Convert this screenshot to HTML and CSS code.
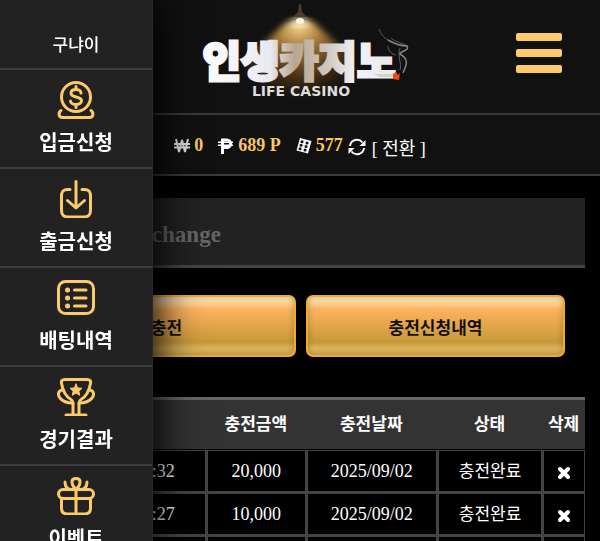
FILE: index.html
```html
<!DOCTYPE html>
<html lang="ko">
<head>
    <meta charset="UTF-8">
    <meta name="viewport" content="width=device-width, initial-scale=1">
    <title>인생카지노</title>
    <link rel="stylesheet" href="styles.css">
</head>
<body>
<nav class="sidebar">
    <p class="user-name">구냐이</p>
    <a href="#" class="menu-item">
        <svg viewBox="0 0 38 38">
            <circle cx="19" cy="16" r="14.500"/>
            <path d="M24 12c0-2-2-3.500-5-3.500s-5 1.500-5 3.800c0 5 10.500 2.500 10.500 7.500 0 2.300-2.500 3.700-5.500 3.700s-5.500-1.500-5.500-3.500M19 5.500v3M19 23.500v3"/>
            <path d="M4 29.500c-3 2-2.500 7 1.500 7h27c4 0 4.500-5 1.500-7"/>
        </svg>
        <span>입금신청</span>
    </a>
    <a href="#" class="menu-item">
        <svg viewBox="0 0 38 38">
            <path d="M13 9.500h-2c-5 0-6.500 2-6.500 6.500v14c0 5 2 7 7 7h15c5 0 7-2 7-7V16c0-4.500-1.500-6.500-6.500-6.500h-2M19 1.500v26M10.500 20.500l8.500 7.500 8.500-7.500"/>
        </svg>
        <span>출금신청</span>
    </a>
    <a href="#" class="menu-item">
        <svg viewBox="0 0 38 38">
            <rect x="1.500" y="2.500" width="35" height="32" rx="7"/>
            <path d="M17.500 11h11.500M17.500 19h11.500M17.500 27h11.500"/>
            <path class="dots" d="M10.500 11h.1M10.500 19h.1M10.500 27h.1"/>
        </svg>
        <span>배팅내역</span>
    </a>
    <a href="#" class="menu-item">
        <svg viewBox="0 0 38 38">
            <path d="M8 1.500h22c3 0 4 1.500 3.500 4-1.500 8-4 13-9.500 16-1.500 1-2 2-2 4V37M8 1.500c-3 0-4 1.500-3.500 4 1.500 8 4 13 9.500 16 1.500 1 2 2 2 4V37M9 37h20"/>
            <path d="M5 12c-4 1-4.500 5-2 8 3 4 8 5 13 5M33 12c4 1 4.500 5 2 8-3 4-8 5-13 5"/>
            <path class="solid" d="M19 6l1.700 3.900 4.300.4-3.200 2.800.9 4.200-3.700-2.200-3.700 2.200.9-4.200-3.200-2.800 4.300-.4z"/>
        </svg>
        <span>경기결과</span>
    </a>
    <a href="#" class="menu-item">
        <svg viewBox="0 0 38 38">
            <rect x="1.500" y="12.500" width="35" height="9" rx="4.500"/>
            <path d="M4.500 22v9c0 4 2 6 6 6h17c4 0 6-2 6-6v-9M19 12.500V37"/>
            <path d="M19 12c-3-2-4-5-4-7.500 0-4 8-4 8 0 0 2.500-1 5.500-4 7.500zM8 5c0 4 2 7 6 7.500M30 5c0 4-2 7-6 7.500"/>
        </svg>
        <span>이벤트</span>
    </a>
</nav>

<header class="header">
    <a href="#" class="logo" aria-label="인생카지노">
        <svg viewBox="0 0 230 113">
            <defs>
                <radialGradient id="glow" gradientUnits="userSpaceOnUse" cx="109" cy="24" r="80">
                    <stop offset="0" stop-color="#ffe0a0"/>
                    <stop offset=".25" stop-color="#c8964a" stop-opacity=".9"/>
                    <stop offset=".65" stop-color="#7a501c" stop-opacity=".55"/>
                    <stop offset="1" stop-color="#3a2408" stop-opacity="0"/>
                </radialGradient>
                <linearGradient id="stone" gradientUnits="userSpaceOnUse" x1="13" y1="0" x2="205" y2="0">
                    <stop offset="0" stop-color="#fff"/>
                    <stop offset=".35" stop-color="#e9e9f0"/>
                    <stop offset=".48" stop-color="#b8a68e"/>
                    <stop offset=".65" stop-color="#cfc8c2"/>
                    <stop offset=".8" stop-color="#f2f2f6"/>
                    <stop offset="1" stop-color="#e8e8ee"/>
                </linearGradient>
                <filter id="soft" x="-20%" y="-20%" width="140%" height="140%">
                    <feGaussianBlur stdDeviation="3"/>
                </filter>
            </defs>
            <path fill="url(#glow)" filter="url(#soft)" d="M98 21h24l36 32q12 20-6 34-43 18-86 0-14-18-4-34z"/>
            <path fill="#4a3c30" d="M109 4h2l1 8 4 4 8 6q-14-4-28 0l8-6 4-4z"/>
            <ellipse cx="110" cy="23" rx="9" ry="4" fill="#fff0c0" filter="url(#soft)"/>
            <ellipse cx="110" cy="21" rx="4" ry="3" fill="#fff6d8"/>
            <text class="logo-name" x="109" y="77" text-anchor="middle" fill="url(#stone)" stroke="url(#stone)">인생카지노</text>
            <g fill="none" stroke="#aaa">
                <path stroke-width="1.500" opacity=".75" d="M213 73c4-9 6-14-3-19 0-3 10-3 7-8-7 0-14-3-19-6"/>
                <path opacity=".5" d="M210 70c2-8-3-13 0-22M198 40c-5-3-7-6-9-11M198 46c0 4 3 8 8 9M217 46c-4-3-10-3-16-8"/>
            </g>
            <path fill="#d7cfc4" d="M183 74h22v3h-14z"/>
            <path fill="#ed4a16" d="M203 74l3-2 2 3 2-2-1 7-6-1z"/>
            <text class="logo-sub" x="111" y="96" text-anchor="middle">LIFE CASINO</text>
        </svg>
    </a>
    <button type="button" class="menu-button" aria-label="메뉴">
        <span></span>
        <span></span>
        <span></span>
    </button>
</header>

<div class="wallet">
    <span class="balance">
        <svg class="won" viewBox="0 0 16 16"><path d="M2 1l3 13L8 2l3 12 3-13M0 6h16M0 9.500h16"/></svg>
        <b>0</b>
    </span>
    <span class="balance">
        <svg viewBox="0 0 16 16"><path stroke-width="3" d="M4.500 16V2h4c5.500 0 5.500 7.500 0 7.500h-4"/><path stroke-width="1.500" d="M0 4.200h15M0 7.200h15"/></svg>
        <b>689 P</b>
    </span>
    <span class="balance">
        <svg viewBox="0 0 16 16">
            <path fill="#fff" stroke="none" d="M4 0l11.500 3-3.500 12.500L.5 12.500z"/>
            <path class="pips" d="M6 3.800h.1M11 5h.1M5 7.300h.1M10 8.500h.1M4 10.800h.1M9 12h.1"/>
        </svg>
        <b>577</b>
    </span>
    <button type="button" class="convert">
        <svg viewBox="0 0 18 18"><path d="M2 8a7 7 0 0 1 12.500-3.500M16 10a7 7 0 0 1-12.500 3.500"/><path fill="#fff" stroke="none" d="M17.500 2v6h-6zM.5 16v-6h6z"/></svg>
        [ 전환 ]
    </button>
</div>

<main class="content">
    <h1 class="page-title">Exchange</h1>
    <div class="tabs">
        <button type="button">충전</button>
        <button type="button">충전신청내역</button>
    </div>
    <table class="history">
        <colgroup>
            <col class="col-time">
            <col class="col-amount">
            <col class="col-date">
            <col class="col-status">
            <col class="col-delete">
        </colgroup>
        <thead>
        <tr>
            <th></th>
            <th>충전금액</th>
            <th>충전날짜</th>
            <th>상태</th>
            <th>삭제</th>
        </tr>
        </thead>
        <tbody>
        <tr>
            <td>2025/09/02 14:32</td>
            <td>20,000</td>
            <td>2025/09/02</td>
            <td class="status">충전완료</td>
            <td><button type="button" class="delete" aria-label="삭제"><svg viewBox="0 0 14 14"><path d="M3 3l8 8M11 3l-8 8"/></svg></button></td>
        </tr>
        <tr>
            <td>2025/09/02 14:27</td>
            <td>10,000</td>
            <td>2025/09/02</td>
            <td class="status">충전완료</td>
            <td><button type="button" class="delete" aria-label="삭제"><svg viewBox="0 0 14 14"><path d="M3 3l8 8M11 3l-8 8"/></svg></button></td>
        </tr>
        <tr>
            <td></td>
            <td></td>
            <td></td>
            <td></td>
            <td></td>
        </tr>
        </tbody>
    </table>
</main>
</body>
</html>
```
FILE: styles.css
```css
* {
    box-sizing: border-box;
}

body {
    margin: 0;
    height: 100vh;
    overflow: hidden;
    background: #000;
    color: #fff;
    font-family: "Liberation Serif", "Noto Sans CJK KR", serif;
    font-size: 18px;
}

button {
    padding: 0;
    border: 0;
    background: none;
    color: inherit;
    font: inherit;
    cursor: pointer;
}

a {
    color: inherit;
    text-decoration: none;
}

svg {
    display: block;
    fill: none;
}

.sidebar {
    position: fixed;
    top: 0;
    bottom: 0;
    left: 0;
    z-index: 10;
    width: 153px;
    overflow: hidden;
    background: #222;
    border-right: 1px solid #292929;
    box-shadow: 0 0 40px 5px #000;
    font-family: "Noto Sans CJK KR", sans-serif;
}

.user-name {
    margin: 0;
    padding: 32px 0 12px;
    border-bottom: 2px solid #3d3d3d;
    font-size: 17px;
    font-weight: 500;
    line-height: 24px;
    text-align: center;
}

.menu-item {
    display: flex;
    flex-direction: column;
    align-items: center;
    gap: 9px;
    height: 99px;
    padding-top: 11px;
    border-bottom: 2px solid #3d3d3d;
    font-size: 20px;
    font-weight: bold;
    line-height: 28px;
}

.menu-item svg {
    width: 38px;
    height: 38px;
    stroke: #fdca69;
    stroke-width: 3;
    stroke-linecap: round;
    stroke-linejoin: round;
}

.menu-item .dots {
    stroke-width: 5;
}

.menu-item .solid {
    fill: #fdca69;
    stroke-width: 1;
}

/* header */
.header {
    display: grid;
    grid-template-columns: 1fr auto 1fr;
    background: #111;
    border-bottom: 2px solid #3a3a3a;
}

.logo {
    grid-column: 2;
    padding-left: 10px;
}

.logo svg {
    width: 230px;
    height: 113px;
}

.logo-name {
    font-family: "Noto Sans CJK KR", sans-serif;
    font-size: 42px;
    font-weight: 900;
    stroke-width: 3;
}

.logo-sub {
    fill: #ddd;
    font-family: "DejaVu Sans", sans-serif;
    font-size: 14px;
    font-weight: bold;
}

.menu-button {
    display: flex;
    flex-direction: column;
    gap: 8px;
    align-self: start;
    justify-self: end;
    width: 46px;
    margin: 33px 38px 0 0;
}

.menu-button span {
    width: 100%;
    height: 8px;
    border-radius: 2px;
    background: #fdca6e;
}

.wallet {
    display: flex;
    align-items: center;
    justify-content: center;
    height: 61px;
    padding-top: 2px;
    background: #111;
    border-bottom: 2px solid #3a3a3a;
}

.wallet svg {
    width: 16px;
    height: 16px;
    stroke: #fff;
    stroke-width: 2;
}

.wallet .won {
    stroke: #ddd;
}

.wallet .pips {
    stroke: #111;
    stroke-width: 3;
    stroke-linecap: round;
}

.balance {
    display: flex;
    align-items: center;
    gap: 4px;
    margin-right: 15px;
    color: #f9c65f;
}

.balance:nth-child(3) {
    margin-right: 5px;
}

.convert {
    display: flex;
    align-items: center;
    gap: 6px;
    padding-top: 3px;
    font-size: 18px;
}

.convert svg {
    width: 18px;
    height: 18px;
}

/* page */
.content {
    padding: 22px 15px 0;
}

.page-title {
    margin: 0;
    padding: 23px 0 16px 110px;
    background: #222;
    border-bottom: 3px solid #444;
    color: #666;
    font-size: 23px;
    line-height: 28px;
}

.tabs {
    display: grid;
    grid-template-columns: 1fr 1fr;
    gap: 10px;
    padding: 27px 20px 40px 22px;
}

.tabs button {
    height: 62px;
    border: 2px solid #f0ac28;
    border-radius: 7px;
    background: linear-gradient(#fff3c4, #ffc887 14%, #fcb25e 22%, #c89838 78%, #dcb35b 88%, #d4b05e);
    box-shadow: inset 0 0 6px rgba(120, 90, 40, 0.5);
    color: #111;
    font-size: 17px;
    font-weight: bold;
}

.history {
    width: 100%;
    border-spacing: 0;
    table-layout: fixed;
    text-align: center;
}

.col-amount {
    width: 17.5%;
}

.col-date {
    width: 23%;
}

.col-status {
    width: 18.5%;
}

.col-delete {
    width: 7.5%;
}

.history th {
    height: 53px;
    padding: 0 0 4px;
    background: #333;
    border-top: 3px solid #666;
    border-bottom: 1px solid #000;
    font-size: 17px;
}

.history td {
    height: 43px;
    padding: 0;
    border: solid #444;
    border-width: 1px 1px 2px 2px;
}

.history .status {
    padding-bottom: 3px;
    font-size: 17px;
}

.delete {
    display: block;
    margin: 4px auto 0;
}

.delete svg {
    width: 14px;
    height: 14px;
    stroke: #fff;
    stroke-width: 4;
    stroke-linecap: round;
}
```
